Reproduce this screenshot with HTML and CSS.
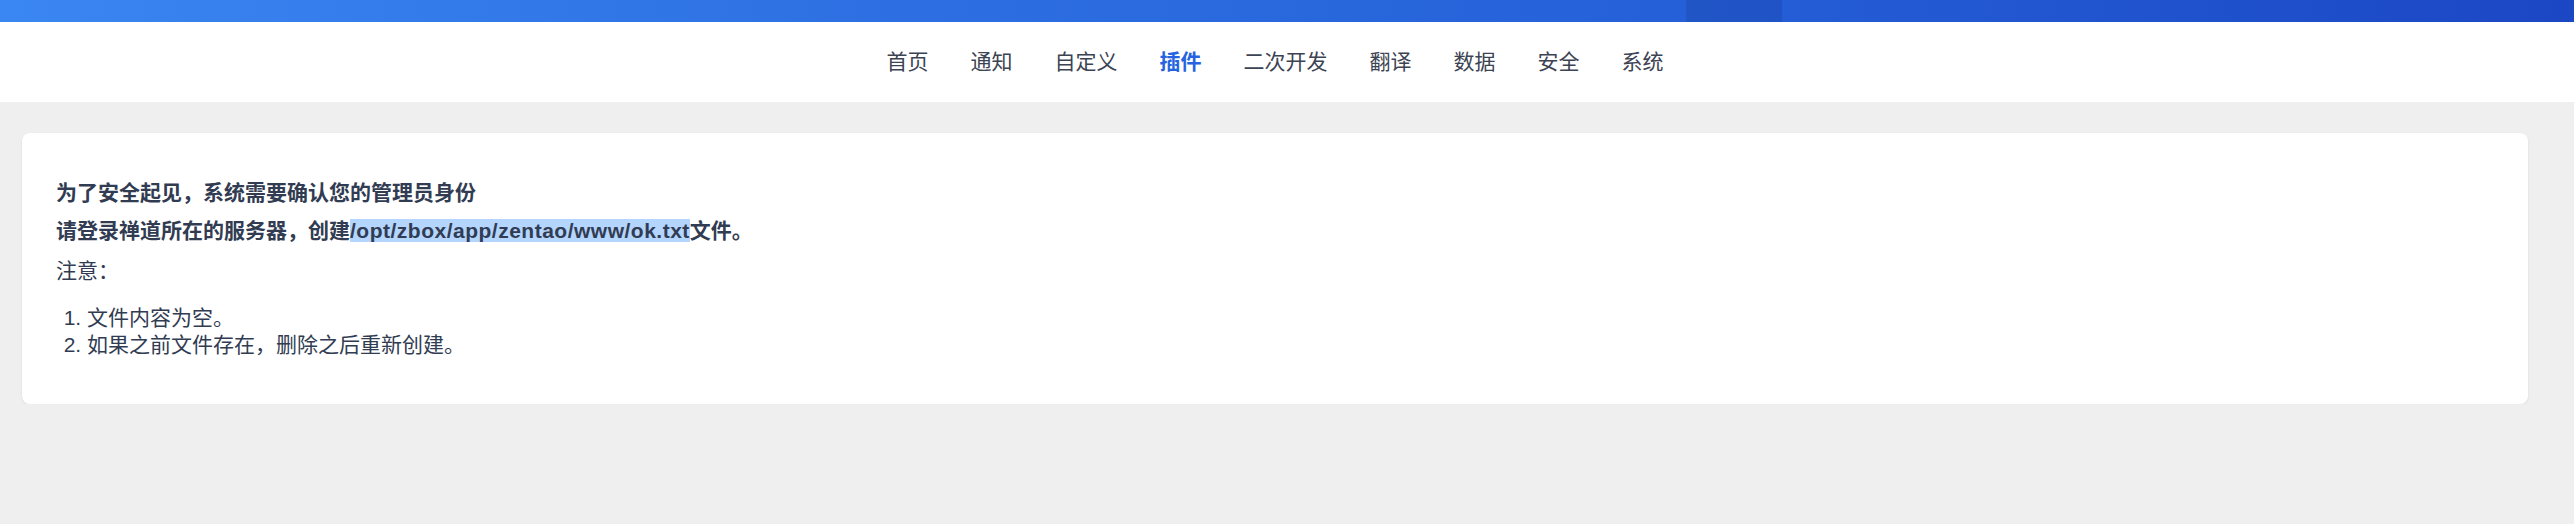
FILE: index.html
```html
<!DOCTYPE html>
<html lang="zh-CN">
<head>
    <meta charset="UTF-8">
    <title>插件 - 安全验证</title>
    <link rel="stylesheet" href="styles.css">
</head>
<body>

    <!-- Header -->
    <div class="topbar">
        <div class="topbar-tab"></div>
    </div>
    <div class="navbar">
        <ul class="nav">
            <li><a href="#">首页</a></li>
            <li><a href="#">通知</a></li>
            <li><a href="#">自定义</a></li>
            <li class="active"><a href="#">插件</a></li>
            <li><a href="#">二次开发</a></li>
            <li><a href="#">翻译</a></li>
            <li><a href="#">数据</a></li>
            <li><a href="#">安全</a></li>
            <li><a href="#">系统</a></li>
        </ul>
    </div>

    <!-- Content -->
    <div class="main">
        <div class="panel">
            <p class="lead">为了安全起见，系统需要确认您的管理员身份</p>
            <p class="lead">请登录禅道所在的服务器，创建<span class="path">/opt/zbox/app/zentao/www/ok.txt</span>文件。</p>
            <p class="note">注意：</p>
            <ol class="tips">
                <li>文件内容为空。</li>
                <li>如果之前文件存在，删除之后重新创建。</li>
            </ol>
        </div>
    </div>

</body>
</html>
```

FILE: styles.css
```css
/* Common Styles */
body {
    margin: 0;
    font-family: 'Liberation Sans', 'Noto Sans CJK SC', sans-serif;
    background-color: #efefef;
    color: #313c52;
}

/* Top bar */
.topbar {
    display: flex;
    height: 22px;
    background: linear-gradient(90deg, #3a86f2 0%, #2d6fe2 35%, #2560d8 65%, #1c47c4 100%);
}

.topbar-tab {
    margin-left: 1686px;
    width: 96px;
    background-color: rgba(10, 20, 80, 0.12);
}

/* Navigation */
.navbar {
    background-color: #fff;
    padding-right: 24px;
}

.nav {
    display: flex;
    justify-content: center;
    gap: 42px;
    list-style: none;
    margin: 0;
    padding: 0;
}

.nav a {
    display: block;
    line-height: 80px;
    font-size: 21px;
    color: #3c4353;
    text-decoration: none;
}

.nav .active a {
    color: #2563e0;
    font-weight: bold;
}

/* Panel */
.main {
    padding: 31px 46px 0 22px;
}

.panel {
    background-color: #fff;
    border-radius: 8px;
    box-shadow: 0 1px 3px rgba(0, 0, 0, 0.08);
    padding: 41px 34px 46px;
    font-size: 21px;
}

.panel p {
    margin: 0;
    line-height: 38px;
}

.lead {
    font-weight: bold;
}

.path {
    background-color: #b4d5fe;
    letter-spacing: 0.5px;
}

.note {
    margin-top: 3px !important;
    line-height: 36px !important;
}

.tips {
    margin: 15px 0 0;
    padding-left: 31px;
}

.tips li {
    line-height: 27px;
}
```
